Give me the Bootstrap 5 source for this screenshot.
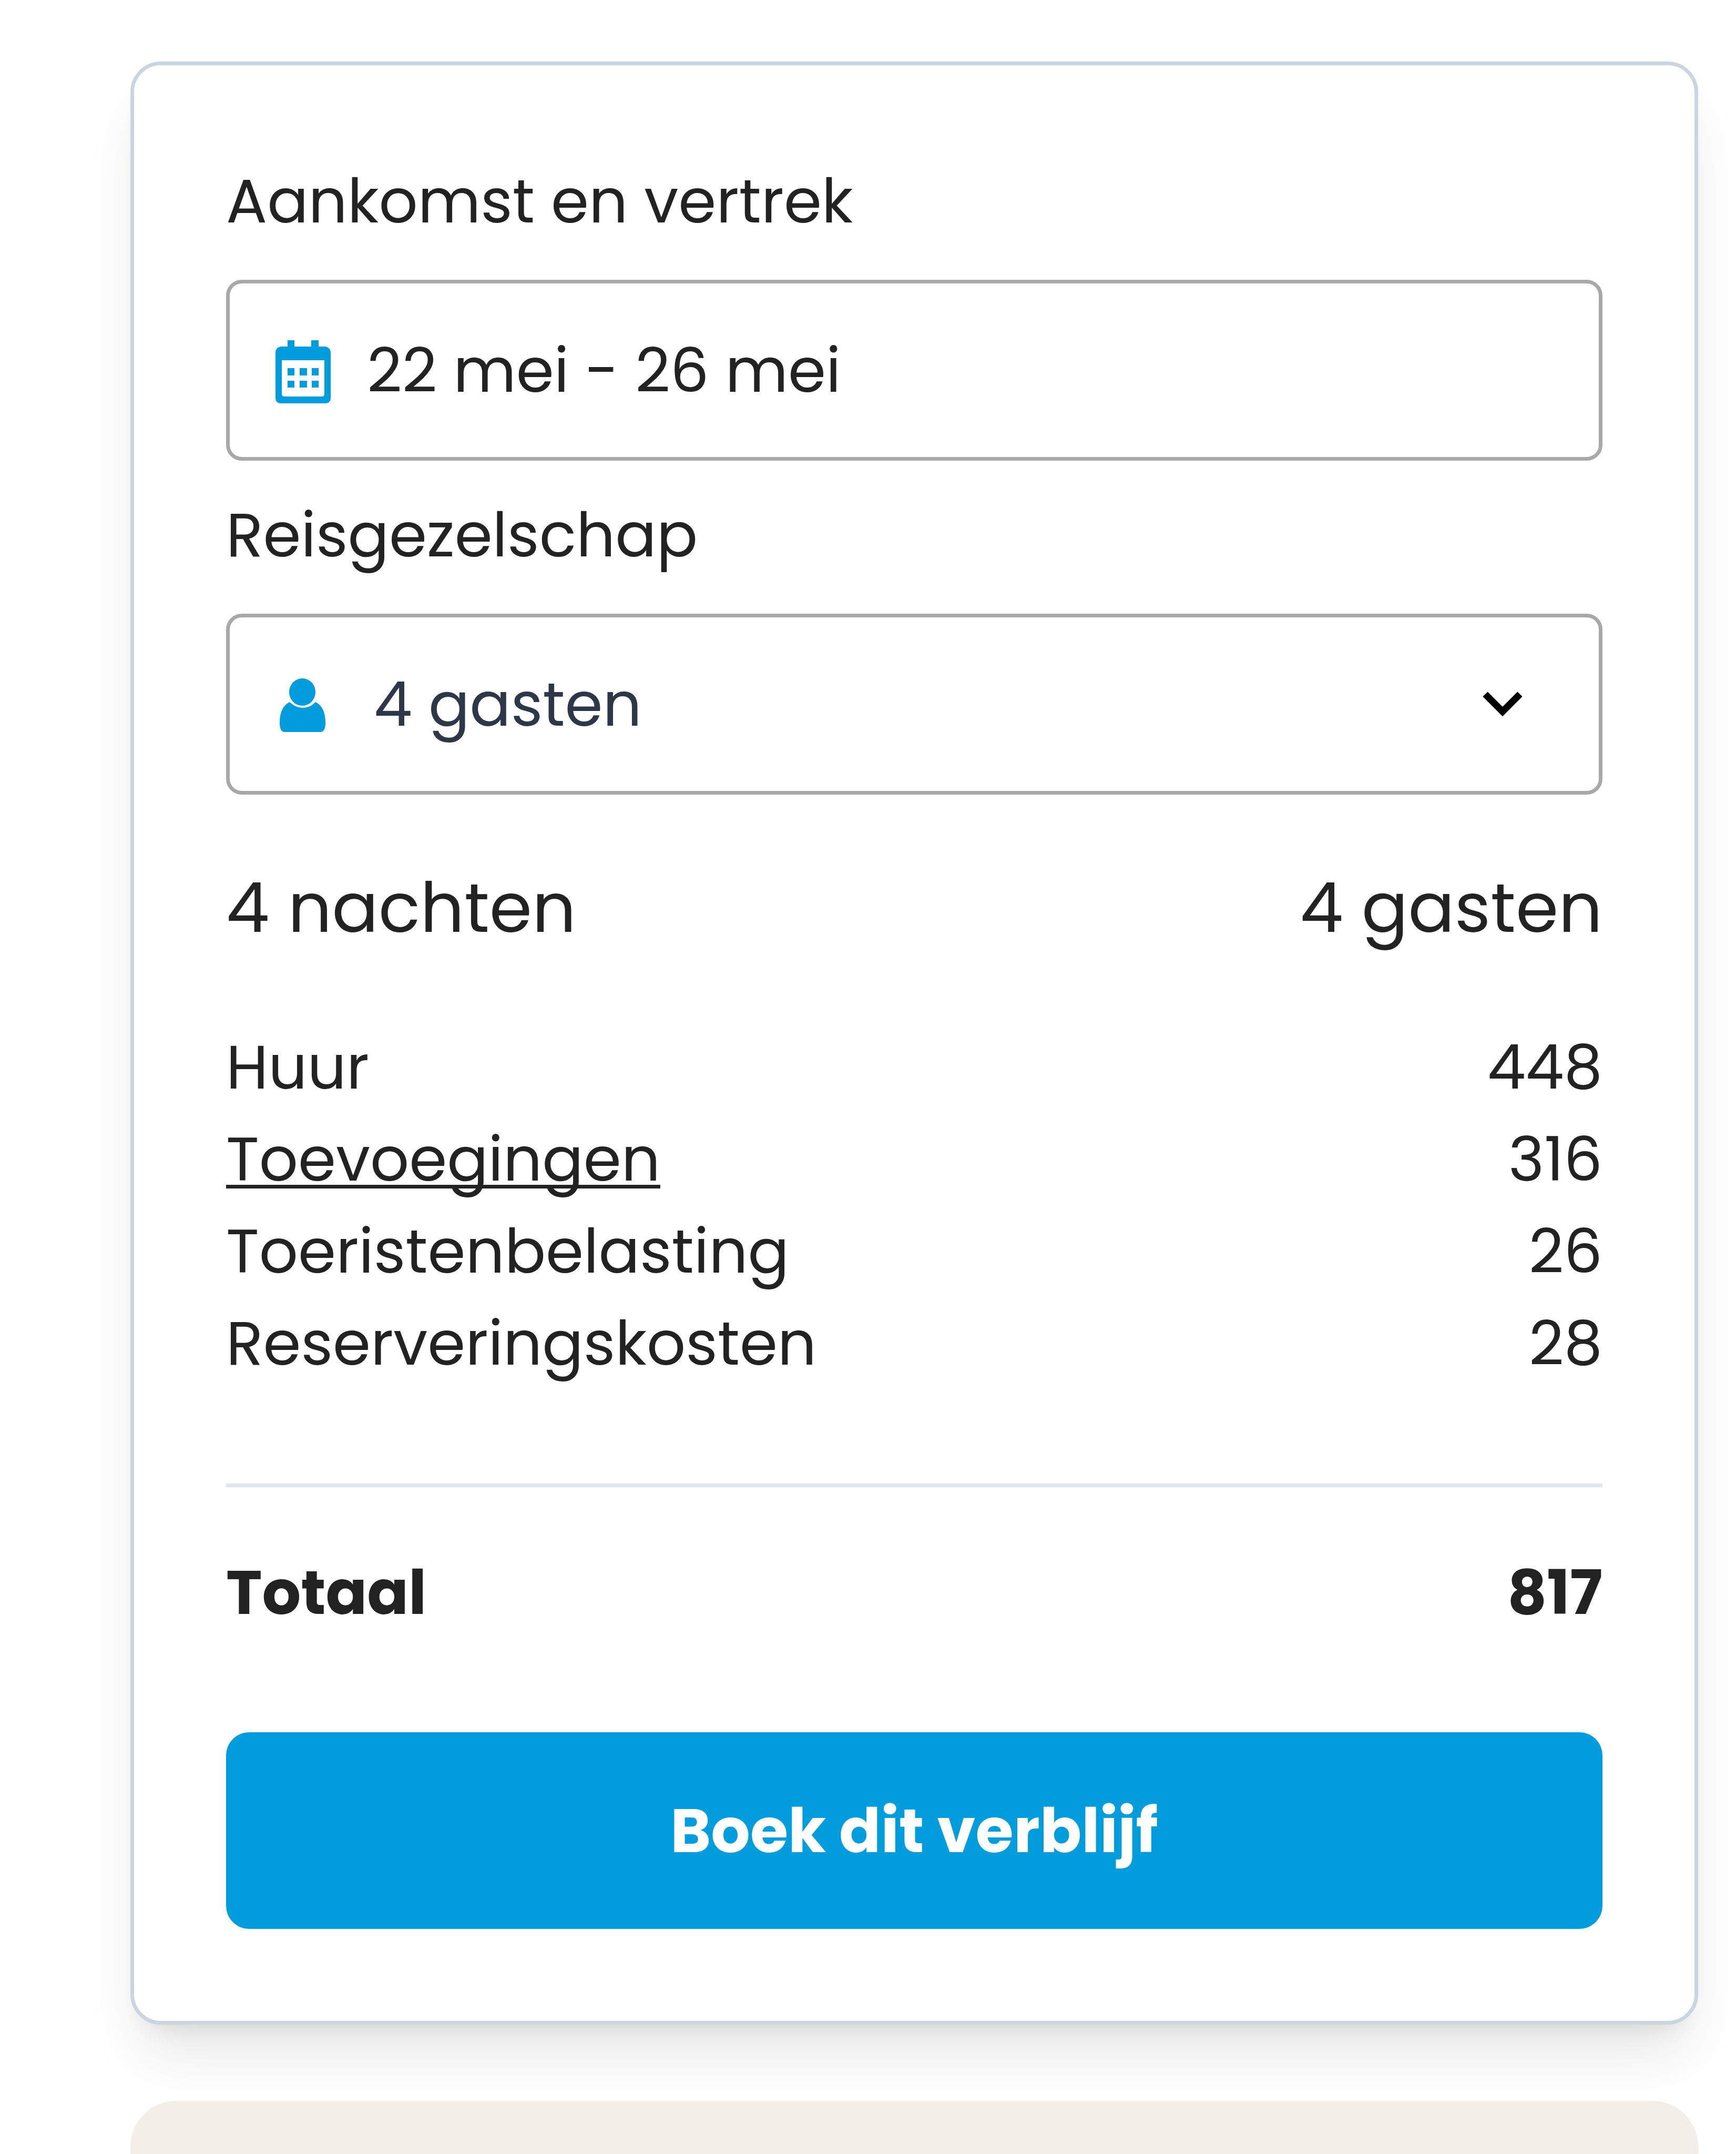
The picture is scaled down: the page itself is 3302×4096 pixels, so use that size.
<!DOCTYPE html>
<html lang="nl">
<head>
<meta charset="utf-8">
<meta name="viewport" content="width=device-width, initial-scale=1">
<title>Boek dit verblijf</title>
<link href="https://cdn.jsdelivr.net/npm/bootstrap@5.3.0/dist/css/bootstrap.min.css" rel="stylesheet">
<style>
  body {
    font-family: Poppins, Inter, sans-serif;
    font-size: 116px;
    line-height: 175px;
    color: #222;
    background: #fff;
  }
  .page-wrap { padding: 117px 72px 0 248px; gap: 145px; }
  .booking-card {
    padding: 171px 175px 175px;
    border: 7px solid #cbd5e1;
    border-radius: 58px;
    box-shadow: 0 73px 110px -22px rgba(0, 0, 0, .1), 0 29px 44px -29px rgba(0, 0, 0, .1);
  }
  .field-label { margin-bottom: 62px; }
  .field-box {
    height: 344px;
    padding: 0 87px;
    border: 7px solid #a8a8a8;
    border-radius: 30px;
  }
  .field-box + .field-label { margin-top: 54px; }
  .field-box input, .field-box select {
    min-width: 0;
    padding: 0;
    border: 0;
    outline: 0;
    background: transparent;
    color: inherit;
    appearance: none;
  }
  .field-box select { color: #2d3748; }
  .field-icon { width: 105px; height: 120px; margin-top: 6px; color: #009cdc; }
  .gap-date { gap: 69px; }
  .gap-guests { gap: 82px; }
  .chevron { width: 76px; height: 50px; margin-right: 58px; }
  .stay-summary { margin-top: 113px; font-size: 131px; line-height: 204px; }
  .cost-table { margin-top: 114px; }
  .cost-table th, .cost-table td { padding: 0; font-weight: 400; }
  .cost-table a { color: inherit; text-decoration-thickness: 7px; text-underline-offset: 8px; text-decoration-skip-ink: none; }
  .total-row { margin-top: 179px; padding-top: 113px; border-top: 7px solid #e2e8f0; }
  .btn-book {
    --bs-btn-color: #fff;
    --bs-btn-bg: #009cdc;
    --bs-btn-border-width: 0;
    --bs-btn-hover-color: #fff;
    --bs-btn-hover-bg: #0089c2;
    --bs-btn-border-radius: 44px;
    --bs-btn-font-size: 117px;
    --bs-btn-line-height: 175px;
    height: 374px;
    margin-top: 178px;
  }
  .next-panel { background: #f3eee7; border-radius: 87px 87px 0 0; }
</style>
</head>
<body>
<main class="page-wrap d-flex flex-column min-vh-100">
  <form class="booking-card bg-white d-flex flex-column">
    <label class="field-label" for="dates">Aankomst en vertrek</label>
    <div class="field-box gap-date d-flex align-items-center">
      <svg class="field-icon flex-shrink-0" viewBox="0 0 105 120" fill="currentColor" aria-hidden="true">
        <path fill-rule="evenodd" d="M23 0h13v12h32V0h14v12h13q10 2 10 12v85q0 11-11 11H11Q0 120 0 109V24q0-10 10-12h13zM12 38v64q0 5 5 5h71q5 0 5-5V38z"/>
        <path d="M23 53h13v14H23zM46 53h14v14H46zM69 53h13v14H69zM23 77h13v13H23zM46 77h14v13H46zM69 77h13v13H69z"/>
      </svg>
      <input class="flex-grow-1" id="dates" type="text" value="22 mei - 26 mei" readonly>
    </div>
    <label class="field-label" for="guests">Reisgezelschap</label>
    <div class="field-box gap-guests d-flex align-items-center">
      <svg class="field-icon flex-shrink-0" viewBox="0 0 105 120" fill="currentColor" aria-hidden="true">
        <ellipse cx="51" cy="34" rx="25" ry="26"/>
        <path d="M27 53q-19 9-19 40 0 17 10 17h67q10 0 10-17 0-31-19-40-10 11-24 11T27 53z"/>
      </svg>
      <select class="flex-grow-1" id="guests"><option>4 gasten</option></select>
      <svg class="chevron flex-shrink-0" viewBox="0 0 76 50" fill="none" stroke="#000" stroke-width="13" aria-hidden="true">
        <path d="M5 6l33 33L71 6"/>
      </svg>
    </div>
    <div class="stay-summary d-flex justify-content-between">
      <span>4 nachten</span><span>4 gasten</span>
    </div>
    <table class="cost-table w-100">
      <tbody>
        <tr><th scope="row">Huur</th><td class="text-end">448</td></tr>
        <tr><th scope="row"><a href="#">Toevoegingen</a></th><td class="text-end">316</td></tr>
        <tr><th scope="row">Toeristenbelasting</th><td class="text-end">26</td></tr>
        <tr><th scope="row">Reserveringskosten</th><td class="text-end">28</td></tr>
      </tbody>
    </table>
    <div class="total-row d-flex justify-content-between fw-bold">
      <span>Totaal</span><span>817</span>
    </div>
    <button class="btn btn-book w-100 fw-bold" type="button">Boek dit verblijf</button>
  </form>
  <section class="next-panel flex-grow-1" aria-label="Meer informatie"></section>
</main>
<script src="https://cdn.jsdelivr.net/npm/bootstrap@5.3.0/dist/js/bootstrap.bundle.min.js"></script>
</body>
</html>
